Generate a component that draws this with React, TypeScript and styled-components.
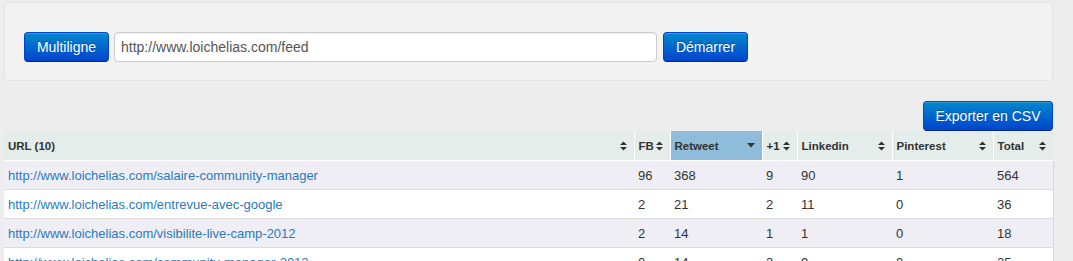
import React from "react";
import styled, { createGlobalStyle } from "styled-components";

const GlobalStyle = createGlobalStyle`
  html, body { margin: 0; padding: 0; background: #ededed; }
  body { font-family: "Liberation Sans", Arial, sans-serif; font-size: 13px; color: #333; }
`;

const Page = styled.div`
  padding: 2px 20px 0 4px;
`;

const Well = styled.div`
  background: #f3f3f3;
  border: 1px solid #e3e3e3;
  border-radius: 4px;
  box-shadow: inset 0 1px 1px rgba(0, 0, 0, 0.03);
  padding: 29px 19px 18px;
  display: flex;
  align-items: center;
  gap: 5px;
`;

const BlueButton = styled.button<{ $w: number }>`
  height: 30px;
  width: ${(p) => p.$w}px;
  padding: 0;
  flex: none;
  font-family: "Liberation Sans", Arial, sans-serif;
  font-size: 14px;
  color: #fff;
  text-shadow: 0 -1px 0 rgba(0, 0, 0, 0.25);
  background: linear-gradient(to bottom, #0088cc, #0044cc);
  border: 1px solid #0044cc;
  border-bottom-color: #002a80;
  border-radius: 4px;
  box-shadow: inset 0 1px 0 rgba(255, 255, 255, 0.2);
  cursor: pointer;
`;

const UrlInput = styled.input`
  box-sizing: border-box;
  width: 543px;
  height: 30px;
  padding: 4px 6px;
  font-family: "Liberation Sans", Arial, sans-serif;
  font-size: 14px;
  color: #555;
  background: #fff;
  border: 1px solid #ccc;
  border-radius: 4px;
  box-shadow: inset 0 1px 1px rgba(0, 0, 0, 0.075);
  margin-right: 1px;
  outline: none;
`;

const Toolbar = styled.div`
  display: flex;
  justify-content: flex-end;
  margin-top: 20px;
  height: 30px;
`;

const Table = styled.table`
  width: 1049px;
  border-collapse: collapse;
  table-layout: fixed;
`;

const Th = styled.th<{ $sorted?: boolean; $last?: boolean }>`
  height: 29px;
  padding: 0 7px 0 4px;
  text-align: left;
  font-size: 11.5px;
  font-weight: bold;
  color: #333;
  background: ${(p) => (p.$sorted ? "#8ebcda" : "#e5edeb")};
  border-right: ${(p) => (p.$last ? "none" : "1px solid #fff")};
  border-bottom: 1px solid #fff;
  white-space: nowrap;
`;

const ThInner = styled.div`
  display: flex;
  align-items: center;
  justify-content: space-between;
`;

const Tr = styled.tr<{ $odd: boolean }>`
  background: ${(p) => (p.$odd ? "#efeef4" : "#fff")};
  border-bottom: 1px solid #dcdcdc;
`;

const Td = styled.td<{ $last?: boolean }>`
  height: 28px;
  padding: 0 4px;
  font-size: 13px;
  color: #333;
  white-space: nowrap;
  overflow: hidden;
  border-right: ${(p) => (p.$last ? "1px solid #d8d8d8" : "none")};
`;

const Link = styled.a`
  color: #2a7bbd;
  text-decoration: none;
`;

const SortBoth = () => (
  <svg width="7" height="10" viewBox="0 0 7 10" style={{ flex: "none" }}>
    <polygon points="0,4 3.5,0.5 7,4" fill="#333" />
    <polygon points="0,6 3.5,9.5 7,6" fill="#333" />
  </svg>
);

const SortDown = () => (
  <svg width="8" height="5" viewBox="0 0 8 5" style={{ flex: "none" }}>
    <polygon points="0,0 8,0 4,4.5" fill="#333" />
  </svg>
);

const columns = [
  { label: "URL (10)", w: 630 },
  { label: "FB", w: 36 },
  { label: "Retweet", w: 92, sorted: true },
  { label: "+1", w: 35 },
  { label: "Linkedin", w: 95 },
  { label: "Pinterest", w: 101 },
  { label: "Total", w: 60 },
];

const rows: [string, number, number, number, number, number, number][] = [
  ["http://www.loichelias.com/salaire-community-manager", 96, 368, 9, 90, 1, 564],
  ["http://www.loichelias.com/entrevue-avec-google", 2, 21, 2, 11, 0, 36],
  ["http://www.loichelias.com/visibilite-live-camp-2012", 2, 14, 1, 1, 0, 18],
  ["http://www.loichelias.com/community-manager-2012", 0, 14, 2, 9, 0, 25],
];

export default function App() {
  return (
    <>
      <GlobalStyle />
      <Page>
        <Well>
          <BlueButton $w={85}>Multiligne</BlueButton>
          <UrlInput defaultValue="http://www.loichelias.com/feed" />
          <BlueButton $w={85}>Démarrer</BlueButton>
        </Well>
        <Toolbar>
          <BlueButton $w={130}>Exporter en CSV</BlueButton>
        </Toolbar>
        <Table>
          <colgroup>
            {columns.map((c) => (
              <col key={c.label} style={{ width: c.w }} />
            ))}
          </colgroup>
          <thead>
            <tr>
              {columns.map((c, i) => (
                <Th key={c.label} $sorted={c.sorted} $last={i === columns.length - 1}>
                  <ThInner>
                    <span>{c.label}</span>
                    {c.sorted ? <SortDown /> : <SortBoth />}
                  </ThInner>
                </Th>
              ))}
            </tr>
          </thead>
          <tbody>
            {rows.map((r, i) => (
              <Tr key={r[0]} $odd={i % 2 === 0}>
                <Td>
                  <Link href="#">{r[0]}</Link>
                </Td>
                {r.slice(1).map((v, j) => (
                  <Td key={j} $last={j === 5}>
                    {v}
                  </Td>
                ))}
              </Tr>
            ))}
          </tbody>
        </Table>
      </Page>
    </>
  );
}
